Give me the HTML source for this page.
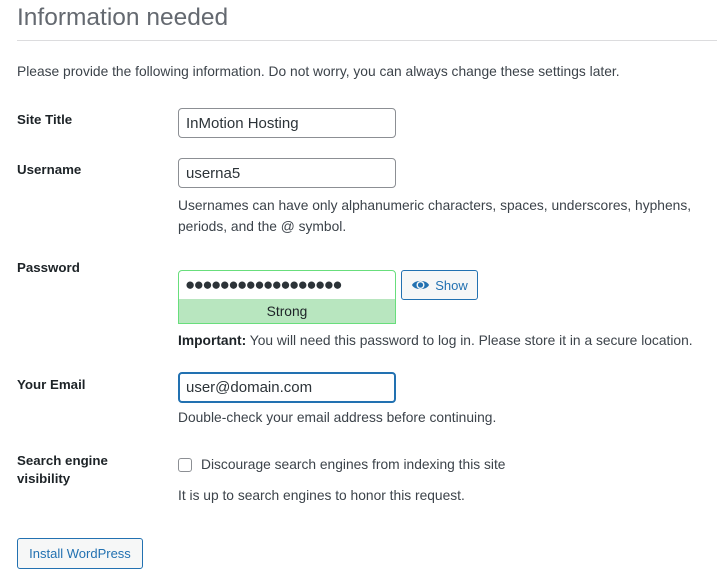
<!DOCTYPE html>
<html><head><style>
body{margin:0;width:720px;height:584px;background:#fff;font-family:"Liberation Sans",sans-serif;font-size:13.8px;color:#3c434a;position:relative;overflow:hidden}
.a{position:absolute;white-space:nowrap}
.l{font-weight:bold;color:#1d2327;font-size:13.3px}
.in{position:absolute;box-sizing:border-box;border:1px solid #8c8f94;border-radius:4px;background:#fff;font-size:15px;color:#2c3338;padding:0 7px;display:flex;align-items:center}
</style></head><body>
<div class="a" style="left:17px;top:4px;font-size:24.5px;color:#646970">Information needed</div>
<div class="a" style="left:17px;top:40px;width:700px;height:1px;background:#dcdcde"></div>
<div class="a" style="left:17px;top:64px">Please provide the following information. Do not worry, you can always change these settings later.</div>

<div class="a l" style="left:17px;top:112px">Site Title</div>
<div class="in" style="left:178px;top:108px;width:218px;height:30px">InMotion Hosting</div>

<div class="a l" style="left:17px;top:162px">Username</div>
<div class="in" style="left:178px;top:158px;width:218px;height:30px">userna5</div>
<div class="a" style="left:178px;top:195px;line-height:21px">Usernames can have only alphanumeric characters, spaces, underscores, hyphens,<br>periods, and the @ symbol.</div>

<div class="a l" style="left:17px;top:260px">Password</div>
<div class="in" style="left:178px;top:270px;width:218px;height:30px;border-color:#68de7c;border-radius:4px 4px 0 0;font-size:17px;letter-spacing:-1.6px;padding-left:6px">●●●●●●●●●●●●●●●●●●</div>
<div class="a" style="left:178px;top:299px;width:218px;height:25px;box-sizing:border-box;border:1px solid #68de7c;border-top:none;background:#b8e6bf;text-align:center;line-height:26px;color:#1d2327">Strong</div>
<div class="a" style="left:401px;top:270px;width:77px;height:30px;box-sizing:border-box;border:1px solid #2271b1;border-radius:3px;background:#f6f7f7;color:#2271b1;display:flex;align-items:center;justify-content:center;gap:5px;font-size:13px">
<svg width="19" height="14" viewBox="0 0 19 14"><path d="M1 7C3.5 1.5 15.5 1.5 18 7C15.5 12.5 3.5 12.5 1 7Z" fill="#2271b1"/><circle cx="9.5" cy="7" r="4" fill="#f6f7f7"/><circle cx="9.5" cy="7" r="2.6" fill="#2271b1"/></svg>Show</div>
<div class="a" style="left:178px;top:333px"><b style="color:#1d2327">Important:</b> You will need this password to log in. Please store it in a secure location.</div>

<div class="a l" style="left:17px;top:377px">Your Email</div>
<div class="in" style="left:178px;top:372px;width:218px;height:31px;border:2px solid #2271b1;padding-left:6px">user@domain.com</div>
<div class="a" style="left:178px;top:410px">Double-check your email address before continuing.</div>

<div class="a l" style="left:17px;top:452px;line-height:18px">Search engine<br>visibility</div>
<div class="a" style="left:178px;top:458px;width:14px;height:14px;box-sizing:border-box;border:1px solid #8c8f94;border-radius:3px"></div>
<div class="a" style="left:201px;top:457px">Discourage search engines from indexing this site</div>
<div class="a" style="left:178px;top:488px">It is up to search engines to honor this request.</div>

<div class="a" style="left:17px;top:538px;width:126px;height:31px;box-sizing:border-box;border:1px solid #2271b1;border-radius:3px;background:#f6f7f7;color:#2271b1;text-align:center;line-height:29px;font-size:13px">Install WordPress</div>
</body></html>
